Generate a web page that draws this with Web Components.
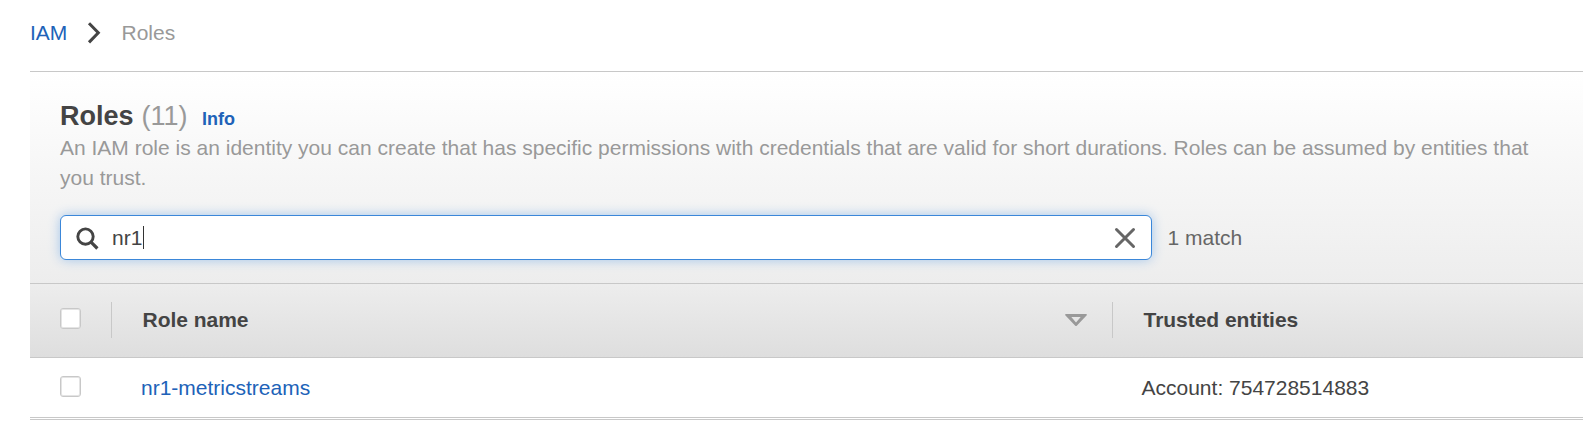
<!DOCTYPE html>
<html lang="en">
<head>
<meta charset="utf-8">
<title>IAM Roles</title>
<style>
body{margin:0;background:#fff;color:#444;font:21px/30px "Liberation Sans",Arial,sans-serif;height:433px;overflow:hidden}
</style>
</head>
<body>
<iam-page></iam-page>
<script>
function define(name, html) {
  customElements.define(name, class extends HTMLElement {
    constructor() {
      super();
      this.attachShadow({ mode: 'open' }).innerHTML = html;
    }
  });
}

define('iam-breadcrumb', `
<style>
:host{display:flex;height:53px;padding-top:18px;margin-left:30px;border-bottom:1px solid #c8c8c8}
a{color:#2062b8;text-decoration:none;width:37px}
svg{width:16px;height:24px;margin:3px 18.5px 0 20px;flex:none}
span{color:#999}
</style>
<a>IAM</a><svg viewBox="0 0 16 24"><path d="M2 2.2 11.3 11.7 2 21.4" fill="none" stroke="#444" stroke-width="3"/></svg><span>Roles</span>`);

define('role-heading', `
<style>
:host{display:block}
div{display:flex;align-items:baseline;height:33px;line-height:32px}
h1{font-size:27px;line-height:32px;margin:0;color:#444}
.n{font-size:27px;color:#999;margin-left:8px}
.i{font-size:18px;font-weight:bold;color:#2062b8;margin-left:14.5px}
p{margin:0;color:#999}
</style>
<div><h1>Roles</h1><span class="n"><slot name="count"></slot></span><a class="i">Info</a></div>
<p><slot></slot></p>`);

define('search-field', `
<style>
:host{display:flex;align-items:center;margin-top:22px;height:45px;color:#666}
.box{box-sizing:border-box;width:1092px;height:45px;display:flex;align-items:center;background:#fff;color:#444;border:1px solid #3b87d9;border-radius:6px;box-shadow:0 0 12px #a3c5ea;padding:0 14px 0 15px;margin-right:15.5px}
.q{width:24px;height:24px;margin-right:12px;flex:none}
.caret{width:1px;height:23px;background:#333;margin-left:1px}
.x{width:24px;height:24px;margin-left:auto;flex:none}
</style>
<div class="box"><svg class="q" viewBox="0 0 24 24" fill="none" stroke="#444"><circle cx="9.5" cy="10.6" r="7.7" stroke-width="2.9"/><path d="M14.8 15.9 21.4 22.5" stroke-width="3.2"/></svg><span><slot></slot></span><i class="caret"></i><svg class="x" viewBox="0 0 24 24"><path d="m3.5 3.5 17 17m0-17-17 17" fill="none" stroke="#666" stroke-width="3" stroke-linecap="round"/></svg></div>
<slot name="result"></slot>`);

define('check-box', `
<style>
:host{display:block;box-sizing:border-box;width:21px;height:21px;background:#fff;border:1px solid #c8c8c8;border-radius:3px;box-shadow:inset 0 0 0 1px #e4e4e4}
</style>`);

define('roles-head', `
<style>
:host{display:grid;grid-template-columns:81px 1001px 1fr;height:73px;border-top:1px solid #c8c8c8;border-bottom:1px solid #c8c8c8;background:linear-gradient(#ededed,#dedede);font-weight:bold}
check-box{margin:24px 0 0 30px}
.c{height:36px;margin-top:18px;box-sizing:border-box;border-left:1px solid #c8c8c8;padding:3px 0 0 30.5px;display:flex;letter-spacing:-.03px}
svg{width:22px;height:14px;margin:9px 25px 0 auto}
</style>
<check-box></check-box>
<div class="c"><slot name="name"></slot><svg viewBox="0 0 22 14"><path d="M1 0H21Q22.5.2 21.5 1.5L12 11.5Q11 12.5 10 11.5L.5 1.5Q-.5.2 1 0ZM6.3 3 11 8.4 15.7 3Z" fill="#999" fill-rule="evenodd"/></svg></div>
<div class="c"><slot name="trusted"></slot></div>`);

define('role-row', `
<style>
:host{display:grid;grid-template-columns:111px 1000.5px 1fr;height:59px;border-bottom:1px solid #c8c8c8}
check-box{margin:18px 0 0 30px}
div{padding-top:15px}
.l{color:#2062b8}
</style>
<check-box></check-box><div class="l"><slot name="name"></slot></div><div><slot name="trusted"></slot></div>`);

define('roles-panel', `
<style>
:host{display:block;margin-left:30px}
.top{box-sizing:border-box;height:211px;padding:28px 30px 0;background:linear-gradient(#fff,#ededed)}
.end{height:1px;border-bottom:1px solid #c8c8c8}
</style>
<div class="top"><slot name="top"></slot></div><slot></slot><div class="end"></div>`);

define('iam-page', `
<style>:host{display:block}</style>
<iam-breadcrumb></iam-breadcrumb>
<roles-panel>
<role-heading slot="top"><span slot="count">(11)</span>An IAM role is an identity you can create that has specific permissions with credentials that are valid for short durations. Roles can be assumed by entities that you trust.</role-heading>
<search-field slot="top">nr1<span slot="result">1 match</span></search-field>
<roles-head><span slot="name">Role name</span><span slot="trusted">Trusted entities</span></roles-head>
<role-row><span slot="name">nr1-metricstreams</span><span slot="trusted">Account: 754728514883</span></role-row>
</roles-panel>`);
</script>
</body>
</html>
